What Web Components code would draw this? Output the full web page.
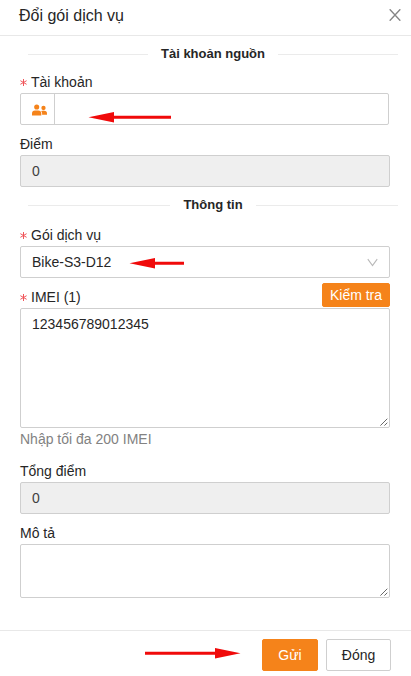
<!DOCTYPE html>
<html lang="vi">
<head>
<meta charset="utf-8">
<title>Đổi gói dịch vụ</title>
<style>
html, body { margin: 0; height: 100%; overflow: hidden; background: #fff; }
body { font: 14px/22px "Liberation Sans", Arial, sans-serif; color: #262626; }
</style>
</head>
<body>
<service-dialog>
  <span slot="title">Đổi gói dịch vụ</span>
  <section-divider>Tài khoản nguồn</section-divider>
  <form-field required label="Tài khoản"><text-box icon style="margin-right:1px"></text-box></form-field>
  <form-field label="Điểm"><text-box disabled>0</text-box></form-field>
  <section-divider>Thông tin</section-divider>
  <form-field required label="Gói dịch vụ" style="padding-top:2px"><text-box select>Bike-S3-D12</text-box></form-field>
  <form-field required label="IMEI (1)">
    <ui-button slot="action" kind="primary" small>Kiểm tra</ui-button>
    <text-area style="height:120px">123456789012345</text-area>
    <span slot="hint">Nhập tối đa 200 IMEI</span>
  </form-field>
  <form-field label="Tổng điểm" style="padding-top:2px"><text-box disabled>0</text-box></form-field>
  <form-field label="Mô tả"><text-area style="height:54px"></text-area></form-field>
  <ui-button slot="footer" kind="primary" style="width:56px">Gửi</ui-button>
  <ui-button slot="footer" style="width:65px">Đóng</ui-button>
</service-dialog>
<pointer-arrow style="left:88px;top:112px;width:83px"></pointer-arrow>
<pointer-arrow style="left:129px;top:258px;width:55px"></pointer-arrow>
<pointer-arrow style="left:145px;top:648px;width:96px;transform:scaleX(-1)"></pointer-arrow>

<script>
const define = (name, render) => customElements.define(name, class extends HTMLElement {
  connectedCallback() {
    if (this.shadowRoot) return;
    this.attachShadow({ mode: 'open' }).innerHTML = render(this);
  }
});

define('section-divider', () => `
<style>
:host { display: flex; align-items: center; gap: 13px; height: 27px; padding-top: 9px; margin: 0 -8px 0 8px; font-size: 13px; font-weight: 700; box-sizing: border-box; white-space: nowrap; }
i { flex: 1; height: 1px; background: #ebebeb; }
</style><i></i><slot></slot><i></i>`);

define('form-field', el => `
<style>
:host { display: block; }
.label { display: flex; justify-content: space-between; height: 30px; }
.name { display: flex; padding-top: 8px; }
.star { width: 7px; height: 7px; margin: 8px 4px 0 0; stroke: #f0555a; stroke-width: 1; fill: none; }
.action { padding-top: 5px; }
::slotted([slot=hint]) { display: block; color: #828282; }
</style>
<div class="label"><div class="name">${el.hasAttribute('required') ? '<svg class="star" viewBox="0 0 7 7"><path d="M3.5 0v7M.4 1.7l6.2 3.6M.4 5.3l6.2-3.6"/></svg>' : ''}<span>${el.getAttribute('label')}</span></div><div class="action"><slot name="action"></slot></div></div>
<slot></slot><slot name="hint"></slot>`);

define('text-box', el => `
<style>
:host { display: flex; align-items: center; height: 32px; box-sizing: border-box; border: 1px solid #cfcfcf; border-radius: 2px; color: #262626; }
:host([disabled]) { background: #efefef; color: #404040; }
.value { flex: 1; padding-left: 11px; }
.prefix { width: 33px; box-sizing: content-box; align-self: stretch; display: flex; align-items: center; border-right: 1px solid #cfcfcf; fill: #f5831a; }
.prefix svg { margin: 1px 0 0 10px; }
.chevron { margin: 1px 11px 0 0; fill: none; stroke: #b8b8b8; stroke-width: 1.1; }
</style>
${el.hasAttribute('icon') ? '<span class="prefix"><svg width="17" height="12" viewBox="0 0 17 12"><circle cx="5.7" cy="3" r="2.55"/><path d="M1 11.5V9.6Q1 6.5 4 6.5H7.2Q10.3 6.5 10.3 9.6V11.5Z"/><circle cx="12.5" cy="4" r="2.15"/><path d="M11.1 10.8V9.2Q11 7.8 10.1 7.1Q10.8 6.8 11.6 6.8H13.2Q16 6.8 16 9.4V10.8Z"/></svg></span>' : ''}
<span class="value"><slot></slot></span>
${el.hasAttribute('select') ? '<svg class="chevron" width="11" height="9" viewBox="0 0 11 9"><path d="M.8 1.2 5.5 7.6 10.2 1.2"/></svg>' : ''}`);

define('text-area', () => `
<style>
:host { display: flex; align-items: flex-start; justify-content: space-between; box-sizing: border-box; padding: 4px 1px 1px 11px; border: 1px solid #cfcfcf; border-radius: 2px; }
svg { align-self: flex-end; stroke: #555; stroke-width: .9; }
</style><span><slot></slot></span><svg width="8" height="8" viewBox="0 0 8 8"><path d="M.4 7.6 7.3.7M4.4 7.6 7.3 4.7"/></svg>`);

define('ui-button', () => `
<style>
:host { display: flex; align-items: center; justify-content: center; height: 32px; box-sizing: border-box; border: 1px solid #cfcfcf; border-radius: 2px; background: #fff; }
:host([kind=primary]) { background: #f5831a; border-color: #f5831a; color: #fff; }
:host([small]) { height: 24px; width: 68px; }
</style><slot></slot>`);

define('pointer-arrow', el => {
  const w = parseFloat(el.style.width);
  return `
<style>
:host { position: absolute; height: 11px; }
svg { display: block; fill: #f00a0a; }
</style><svg width="${w}" height="11" viewBox="0 0 ${w} 11"><path d="M.5 5.3 26 0V3.8H${w}V6.7H26V10.4Z"/></svg>`;
});

define('service-dialog', () => `
<style>
:host { display: grid; grid-template-rows: 36px 594px 46px; height: 676px; box-sizing: border-box; }
header { display: flex; justify-content: space-between; align-items: center; padding: 0 10px 3px 19px; border-bottom: 1px solid #e8e8e8; font-size: 16px; }
header svg { margin-bottom: 2px; stroke: #858585; stroke-width: 1.4; }
main { padding: 0 21px 0 20px; }
footer { display: flex; justify-content: flex-end; gap: 8px; padding: 8px 20px 5px 0; border-top: 1px solid #e8e8e8; box-sizing: border-box; }
</style>
<header><slot name="title"></slot><svg width="12" height="12" viewBox="0 0 12 12"><path d="M.7.3 11.3 11.7M11.3.3.7 11.7"/></svg></header>
<main><slot></slot></main>
<footer><slot name="footer"></slot></footer>`);
</script>
</body>
</html>
